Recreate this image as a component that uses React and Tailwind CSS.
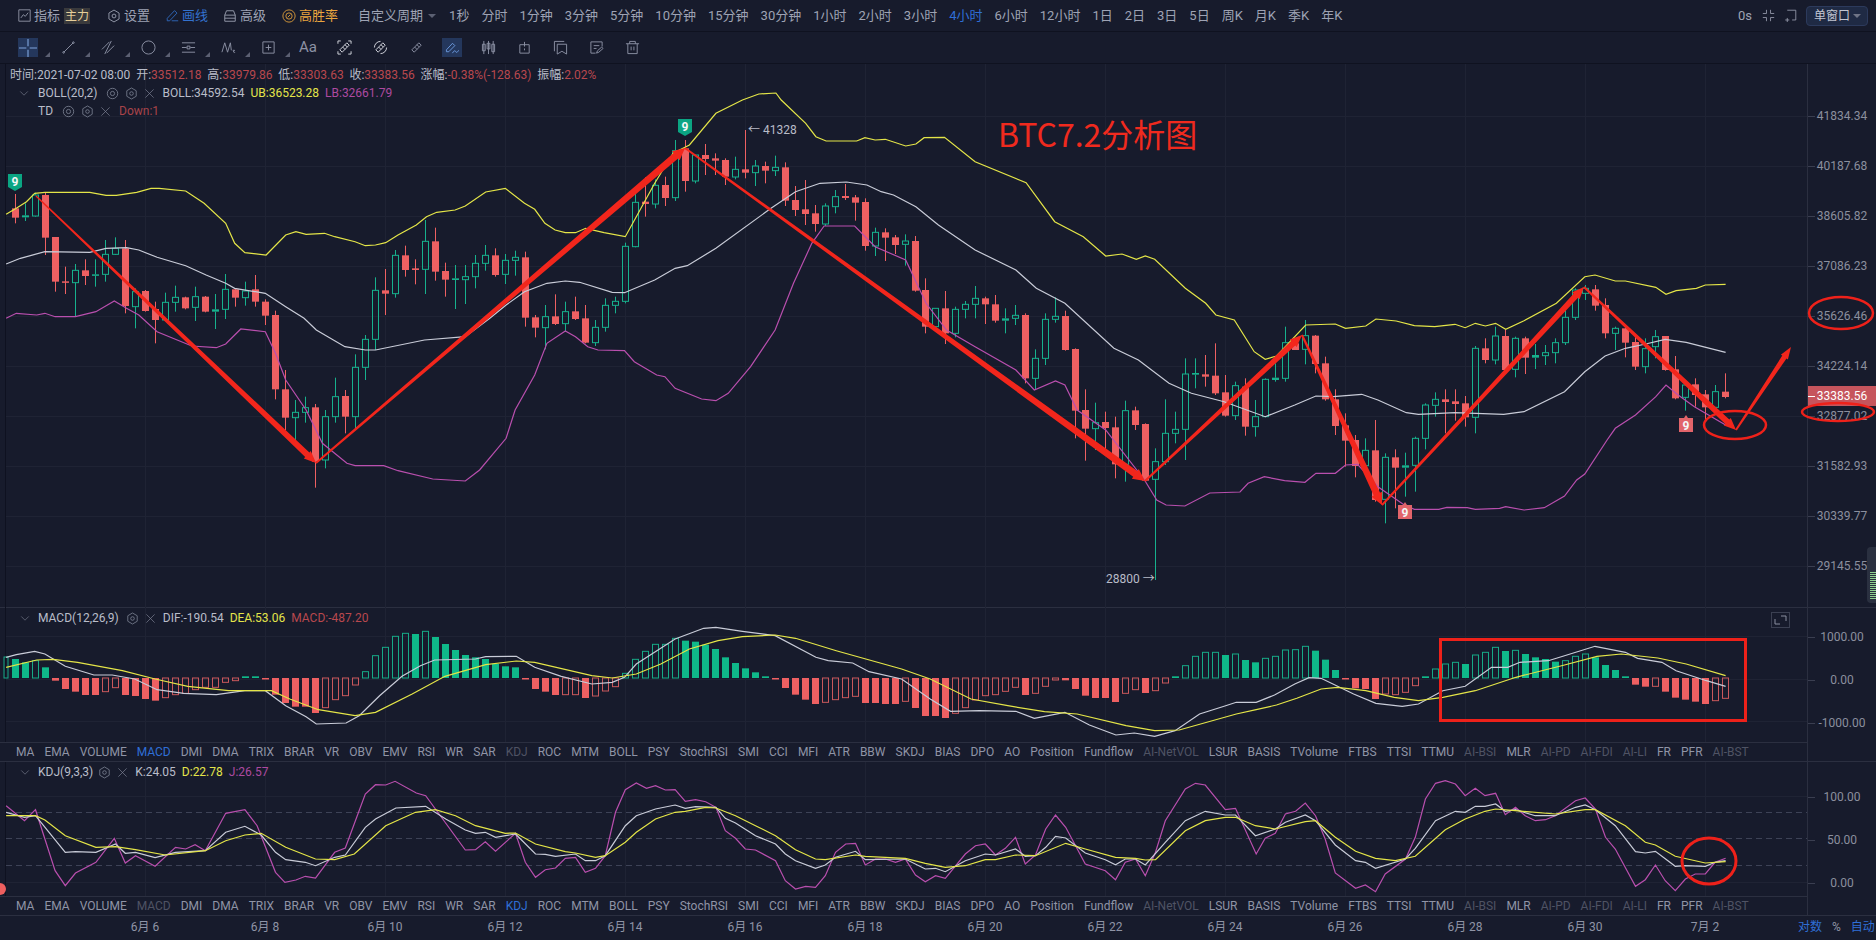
import React from "react";

// readings are taken in three chart crops, so each series comes in three parts
const CUT_A = 628;
const CUT_B = 1245;
const toXY = (pts, ox, oy, sx) => pts.map(([x, y]) => [ox + x / sx, oy + y / 3]);
const series = (a, b, c, oy) => {
  const [ya, yb, yc] = oy;
  const all = [
    ...toXY(a, 0, ya, 2.45).filter((p) => p[0] < CUT_A),
    ...toXY(b, 620, yb, 2.45).filter((p) => p[0] >= CUT_A && p[0] < CUT_B),
    ...toXY(c, 1240, yc, 2.465).filter((p) => p[0] >= CUT_B),
  ];
  return all.map((p) => `${p[0].toFixed(1)},${p[1].toFixed(1)}`).join(" ");
};
const MAIN_Y = [120, 100, 270];
const SUB_Y = [600, 600, 600];

const CANDLES_A = [
  ["r",265,293,222,310],["g",286,292,250,303],["g",225,288,218,290],["r",225,353,218,405],["r",351,485,351,515],
  ["r",484,488,440,522],["g",451,488,432,588],["r",451,468,418,495],["g",463,467,418,500],["g",403,463,360,485],
  ["g",385,403,352,405],["r",385,558,360,580],["g",515,560,505,625],["r",513,573,510,575],["r",567,600,545,670],
  ["g",547,600,518,602],["g",532,547,497,575],["r",532,565,530,568],["g",530,562,500,603],["r",530,575,528,577],
  ["g",568,575,522,627],["g",508,568,462,597],["r",508,533,505,560],["g",513,533,485,557],["r",508,545,465,560],
  ["r",545,587,538,615],["r",585,808,572,838],["r",808,893,750,930],["g",877,893,840,960],["g",863,877,830,908],
  ["r",862,1025,852,1103],["g",890,1020,870,1045],["g",830,890,773,908],["r",828,890,810,940],["g",742,890,703,925],
  ["g",658,742,645,780],["g",511,658,472,690],["r",511,521,447,585],["g",406,521,390,533],["r",406,450,377,470],
  ["r",445,450,418,493],["g",364,448,300,522],["r",364,455,323,482],["r",453,479,428,530],["g",475,480,435,567],
  ["g",470,479,435,552],["g",430,470,405,505],["g",406,430,375,452],["r",406,465,385,470],["g",421,463,402,492],
  ["g",412,421,392,467],["r",412,593,395,620],["r",592,623,585,652],["g",590,623,555,688],["r",589,612,523,615],
  ["g",575,611,545,635],["r",574,597,530,600],["r",595,668,555,670],["g",622,668,600,678],["g",556,622,535,635],
  ["g",544,556,530,580],["g",379,544,368,550],["g",247,380,222,382],
];
const CANDLES_B = [
  ["r",305,312,232,350],["g",256,312,238,325],["r",255,294,230,318],["g",152,293,120,303],["r",145,243,120,275],
  ["g",165,243,165,250],["r",165,177,132,225],["r",175,182,160,225],["r",180,230,175,255],["g",208,231,170,238],
  ["r",208,218,90,235],["g",198,218,180,258],["r",198,212,185,250],["g",202,212,167,228],["r",202,302,187,318],
  ["r",300,330,258,348],["r",328,342,240,375],["r",340,372,315,395],["g",318,372,310,378],["g",290,320,270,340],
  ["r",288,294,252,300],["r",292,308,285,362],["r",306,438,295,452],["g",397,438,383,468],["r",397,413,385,483],
  ["r",412,435,405,462],["g",423,433,403,497],["r",423,572,408,575],["r",570,680,535,700],["g",625,680,625,690],
  ["r",625,700,573,732],["g",628,700,620,712],["g",613,628,603,655],["g",595,613,558,655],["r",595,613,590,672],
  ["r",613,662,585,668],["g",655,662,625,700],["g",646,655,615,675],["r",645,835,640,850],["g",775,835,748,870],
  ["g",658,775,640,795],["g",649,658,592,668],["r",648,750,632,752],["r",747,932,745,1015],["r",930,986,868,1082],
  ["g",968,986,908,1050],["r",966,984,935,1050],["r",982,1093,950,1135],["g",932,1093,902,1145],["r",931,975,920,990],
  ["r",972,1142,970,1145],["g",1085,1138,1045,1440],["g",1000,1085,898,1095],["g",988,1000,935,1030],["g",822,988,775,1080],
  ["g",819,824,775,865],["r",823,830,765,860],["r",827,880,730,885],["r",877,947,825,950],["g",857,947,845,960],
  ["r",860,980,835,1007],["g",950,980,900,1010],
];
const CANDLES_C = [
  ["g",328,440,325,442],["g",323,330,280,335],["g",218,325,170,335],["r",220,240,205,240],["g",197,238,150,283],
  ["r",197,282,195,310],["r",280,388,260,392],["r",388,468,358,495],["r",466,512,430,590],["r",510,588,495,622],
  ["g",541,587,505,590],["r",541,690,450,695],["g",562,688,550,760],["r",562,593,538,715],["g",586,593,548,680],
  ["g",505,586,500,665],["g",405,505,400,538],["g",388,406,367,440],["r",388,396,358,490],["r",394,402,358,452],
  ["r",400,442,378,470],["g",235,442,228,490],["r",235,270,205,280],["g",198,270,170,283],["r",198,300,180,305],
  ["g",205,298,200,322],["r",205,263,200,312],["g",255,263,222,297],["g",248,257,225,285],["g",218,248,205,280],
  ["g",142,218,120,225],["g",60,142,55,150],["g",55,70,45,90],["r",58,107,45,122],["r",105,190,85,205],
  ["g",175,190,170,240],["r",175,218,170,262],["r",216,290,200,300],["g",236,290,205,310],["g",200,230,180,265],
  ["r",198,300,198,302],["r",298,385,258,388],["g",345,382,330,422],["r",343,375,325,410],["r",373,412,360,450],
  ["g",365,412,345,415],["r",365,381,310,385],
];
const toCandle = (oy) => ([t, o, c, h, l]) => [t, oy + o / 3, oy + c / 3, oy + h / 3, oy + l / 3];
const CANDLES = [
  ...CANDLES_A.map(toCandle(120)),
  ...CANDLES_B.map(toCandle(100)),
  ...CANDLES_C.map(toCandle(270)),
];

const UB = series(
  [[15,283],[40,265],[65,245],[85,220],[110,217],[220,217],[260,226],[285,226],[335,217],[370,205],[390,205],[455,213],[500,250],[553,310],[575,370],[600,398],[652,405],[700,345],[725,335],[750,343],[795,340],[820,350],[870,365],[895,377],[920,375],[945,368],[975,345],[1020,315],[1045,290],[1070,277],[1115,270],[1140,258],[1190,216],[1238,205],[1285,250],[1310,268],[1335,310],[1360,330],[1385,338],[1410,338],[1435,325],[1480,338],[1532,350]],
  [[10,408],[40,350],[85,250],[130,160],[170,135],[235,40],[300,0],[340,-18],[382,-21],[395,0],[455,70],[480,110],[505,123],[580,123],[600,113],[625,120],[650,118],[700,138],[725,132],[745,113],[795,112],[870,185],[995,248],[1065,365],[1135,410],[1190,468],[1230,462],[1265,478],[1287,468],[1310,478],[1385,565],[1435,610],[1460,645],[1505,660],[1560,765]],
  [[35,245],[62,268],[90,258],[162,165],[235,162],[260,175],[310,168],[335,147],[385,153],[430,167],[480,170],[530,163],[555,173],[580,160],[605,168],[630,160],[655,178],[700,152],[780,100],[850,20],[875,15],[925,33],[950,33],[1025,52],[1050,73],[1075,62],[1125,55],[1147,45],[1197,43]],
  MAIN_Y
);
const MID = series(
  [[15,432],[50,415],[110,395],[220,397],[260,385],[310,383],[340,390],[385,412],[455,437],[505,465],[553,490],[575,505],[650,520],[700,560],[745,595],[775,630],[845,680],[895,690],[920,690],[1040,660],[1140,650],[1200,595],[1240,555],[1285,515],[1340,490],[1385,483],[1420,487],[1500,517],[1530,518]],
  [[13,578],[85,540],[135,505],[165,497],[235,445],[370,325],[430,275],[490,250],[555,246],[605,255],[640,275],[670,285],[725,320],[780,375],[870,450],[970,510],[1020,565],[1090,610],[1210,745],[1270,780],[1345,850],[1400,880],[1480,905],[1568,948]],
  [[62,440],[135,405],[187,378],[230,380],[300,373],[340,390],[410,428],[440,433],[530,428],[650,433],[700,425],[800,365],[850,305],[900,258],[950,235],[1000,222],[1048,208],[1100,217],[1197,247]],
  MAIN_Y
);
const LB = series(
  [[15,595],[40,580],[90,585],[110,580],[135,590],[185,590],[235,575],[280,543],[310,565],[340,585],[385,635],[470,678],[530,683],[553,672],[590,627],[650,635],[675,700],[700,780],[750,870],[790,970],[850,1030],[870,1037],[940,1037],[975,1052],[1060,1077],[1140,1083],[1175,1050],[1240,955],[1262,870],[1310,765],[1340,670],[1385,633],[1410,650],[1440,680],[1465,690],[1530,692]],
  [[0,750],[35,785],[90,825],[110,830],[135,865],[200,897],[235,902],[265,880],[320,800],[380,690],[425,550],[470,430],[500,378],[575,378],[625,440],[700,480],[750,610],[800,690],[870,740],[970,810],[1015,870],[1067,843],[1090,855],[1120,930],[1190,990],[1285,1140],[1315,1200],[1338,1215],[1384,1218],[1445,1179],[1519,1176]],
  [[20,640],[60,620],[110,632],[160,637],[187,610],[235,610],[260,585],[290,583],[340,650],[405,705],[430,718],[490,718],[510,712],[560,713],[580,718],[640,715],[655,710],[700,720],[750,713],[800,678],[830,630],[850,612],[905,510],[925,475],[975,435],[1025,380],[1050,345],[1080,375],[1120,410],[1197,465]],
  MAIN_Y
);

// negative tip = hollow bar, baseline is 237 in the crop
const HIST = [
  180,190,-185,205,245,270,278,288,288,-278,-266,288,291,300,305,-296,-287,-283,-272,-265,-265,-250,-245,232,232,240,287,312,323,323,342,-326,-302,-290,-258,-218,-170,-145,-112,-103,105,-97,114,135,153,168,175,180,195,202,205,241,270,278,288,-287,-287,297,-291,-276,-263,-223,-181,
  -157,-136,-136,-118,125,128,137,150,175,192,208,220,232,241,267,287,302,315,-310,-302,-296,-292,312,312,315,315,-307,327,351,351,357,-343,-326,-303,-290,-287,-277,-265,288,-283,-262,-243,244,270,290,297,297,309,-283,-272,282,-275,-252,232,-200,-172,-160,-160,168,-165,183,190,
  -178,-172,-153,-152,-142,155,182,213,240,268,270,300,-285,-287,-280,-260,232,-210,-195,-190,195,-168,-160,-145,156,-154,165,175,180,188,-185,-172,-165,175,198,213,232,257,263,-262,278,296,302,308,315,-305,-298,
];

const DIF = series(
  [[15,175],[40,167],[85,157],[110,165],[160,202],[230,228],[275,228],[330,240],[385,272],[450,283],[530,287],[600,275],[650,275],[700,320],[750,353],[775,375],[848,372],[880,350],[930,290],[985,232],[1030,200],[1065,183],[1165,180],[1190,173],[1265,172],[1310,205],[1375,232],[1450,255],[1500,250],[1530,235]],
  [[0,233],[40,195],[135,120],[205,88],[235,85],[300,97],[380,110],[480,175],[510,185],[570,192],[610,218],[690,240],[760,300],[810,337],[880,335],[970,337],[1015,358],[1090,340],[1150,378],[1215,408],[1260,402],[1310,412],[1360,395],[1420,345],[1480,322],[1510,310],[1568,305]],
  [[40,310],[85,288],[135,255],[170,236],[200,238],[280,285],[335,313],[400,322],[440,315],[500,275],[555,262],[620,205],[660,205],[690,190],[760,185],[800,170],[875,142],[950,160],[980,178],[1040,190],[1075,215],[1150,245],[1197,262]],
  SUB_Y
);
const DEA = series(
  [[15,205],[90,183],[130,181],[190,190],[300,215],[380,240],[460,262],[560,275],[665,275],[710,300],[780,332],[870,350],[920,340],[1010,285],[1090,232],[1190,197],[1265,186],[1310,190],[1450,230],[1500,237]],
  [[0,235],[40,225],[100,195],[170,150],[240,125],[300,113],[380,108],[430,118],[530,155],[690,210],[760,240],[860,300],[950,320],[1040,338],[1120,345],[1240,380],[1310,395],[1370,393],[1510,345],[1568,330]],
  [[40,332],[90,318],[140,298],[200,270],[240,265],[310,275],[380,295],[440,305],[500,295],[580,275],[680,235],[800,198],[880,172],[940,165],[1030,177],[1100,195],[1197,230]],
  SUB_Y
);

const KDJ_J = series(
  [[15,620],[60,665],[87,632],[110,720],[135,815],[160,860],[185,822],[235,790],[280,718],[307,792],[332,770],[380,802],[430,745],[455,750],[478,737],[503,755],[553,643],[600,632],[630,680],[675,820],[698,850],[725,843],[748,832],[773,837],[820,760],[846,747],[895,585],[920,557],[945,558],[968,547],[1020,582],[1043,590],[1140,753],[1165,752],[1189,728],[1214,757],[1263,703],[1287,790],[1312,835],[1336,812],[1361,807],[1385,778],[1410,775],[1434,820],[1459,808],[1483,770],[1508,640],[1532,572]],
  [[0,600],[15,565],[40,552],[65,568],[87,560],[111,573],[135,572],[160,607],[185,602],[210,608],[235,625],[258,695],[283,718],[307,750],[332,753],[381,785],[405,845],[430,870],[455,862],[479,865],[503,830],[528,760],[553,735],[577,733],[601,798],[626,780],[650,780],[675,790],[699,780],[724,828],[748,848],[773,830],[797,838],[846,765],[871,740],[895,735],[920,768],[944,748],[969,715],[993,795],[1018,768],[1043,690],[1067,648],[1092,685],[1140,795],[1189,815],[1214,842],[1238,790],[1263,780],[1287,830],[1312,760],[1336,665],[1385,570],[1410,553],[1434,558],[1483,632],[1508,628],[1532,730],[1557,768],[1568,750]],
  [[40,765],[62,718],[87,703],[112,645],[137,637],[161,612],[186,650],[210,720],[235,822],[285,868],[309,858],[334,878],[358,825],[408,780],[432,715],[457,600],[482,553],[506,545],[531,555],[555,590],[580,568],[604,590],[630,583],[654,647],[679,625],[703,650],[728,665],[753,662],[777,650],[827,605],[851,597],[876,630],[901,715],[925,750],[975,862],[999,842],[1024,798],[1048,845],[1073,875],[1098,840],[1122,825],[1147,825],[1171,790],[1197,778]],
  SUB_Y
);
const KDJ_K = series(
  [[15,640],[60,655],[87,650],[160,760],[185,758],[235,760],[283,735],[307,763],[332,760],[380,776],[430,760],[503,755],[553,700],[600,682],[640,708],[675,760],[700,782],[748,790],[773,800],[820,775],[846,768],[895,685],[920,660],[970,627],[1043,622],[1092,660],[1140,693],[1165,703],[1189,700],[1214,715],[1263,705],[1312,765],[1336,766],[1361,772],[1410,765],[1434,785],[1459,785],[1483,770],[1532,680]],
  [[0,680],[40,650],[87,630],[135,618],[160,628],[185,623],[235,625],[258,658],[283,672],[332,710],[381,735],[405,765],[430,785],[479,808],[503,798],[528,775],[577,757],[601,782],[699,780],[748,810],[773,808],[797,818],[846,785],[895,765],[920,768],[969,750],[993,772],[1018,770],[1043,745],[1067,712],[1092,717],[1140,762],[1189,782],[1214,797],[1238,780],[1263,780],[1287,798],[1336,730],[1385,665],[1434,637],[1483,648],[1508,648],[1532,690],[1557,708],[1568,700]],
  [[38,710],[87,690],[112,670],[161,648],[186,665],[235,738],[285,785],[309,790],[334,808],[408,780],[432,748],[482,665],[531,637],[555,640],[580,622],[604,622],[630,615],[654,637],[679,632],[728,650],[777,650],[827,625],[851,618],[876,632],[925,680],[975,758],[999,762],[1024,757],[1073,802],[1098,800],[1147,802],[1171,790],[1197,785]],
  SUB_Y
);
const KDJ_D = series(
  [[15,650],[87,650],[110,663],[160,710],[235,745],[283,743],[332,752],[405,768],[503,755],[553,725],[600,708],[640,703],[700,745],[773,780],[820,782],[868,765],[945,680],[1018,640],[1067,632],[1116,650],[1165,680],[1238,703],[1263,702],[1312,735],[1385,758],[1410,762],[1459,775],[1483,770],[1532,730]],
  [[0,745],[40,700],[87,660],[135,640],[160,637],[210,625],[235,627],[283,650],[332,680],[381,710],[430,752],[479,780],[503,782],[577,768],[601,772],[699,778],[748,793],[797,805],[846,800],[895,782],[920,782],[969,768],[1018,770],[1092,733],[1140,750],[1214,775],[1263,778],[1287,783],[1312,782],[1385,695],[1434,665],[1483,655],[1508,655],[1532,672],[1568,685]],
  [[38,680],[87,690],[161,668],[186,665],[235,715],[285,757],[334,778],[383,785],[432,772],[506,692],[555,660],[604,637],[630,630],[679,635],[777,645],[851,632],[876,632],[950,680],[999,730],[1024,738],[1073,772],[1147,792],[1197,788]],
  SUB_Y
);

const GRID_X = Array.from({ length: 14 }, (_, i) => 145 + 120 * i);
const candleX = (i) => 15.5 + 10 * i;

const YELLOW = "#e4e548";
const WHITE = "#c9ccd8";
const PINK = "#b94fae";

const PERIODS = ["1秒","分时","1分钟","3分钟","5分钟","10分钟","15分钟","30分钟","1小时","2小时","3小时","4小时","6小时","12小时","1日","2日","3日","5日","周K","月K","季K","年K"];
const INDICATORS = ["MA","EMA","VOLUME","MACD","DMI","DMA","TRIX","BRAR","VR","OBV","EMV","RSI","WR","SAR","KDJ","ROC","MTM","BOLL","PSY","StochRSI","SMI","CCI","MFI","ATR","BBW","SKDJ","BIAS","DPO","AO","Position","Fundflow","AI-NetVOL","LSUR","BASIS","TVolume","FTBS","TTSI","TTMU","AI-BSI","MLR","AI-PD","AI-FDI","AI-LI","FR","PFR","AI-BST"];
const DIM = ["AI-NetVOL","AI-BSI","AI-PD","AI-FDI","AI-LI","AI-BST"];
const PRICES = ["41834.34","40187.68","38605.82","37086.23","35626.46","34224.14","32877.02","31582.93","30339.77","29145.55"];
const DATES = ["6月 6","6月 8","6月 10","6月 12","6月 14","6月 16","6月 18","6月 20","6月 22","6月 24","6月 26","6月 28","6月 30","7月 2"];

// tapered hand-drawn trend stroke with a small head at its end
function trendPath(a, b, w0, w1) {
  const dx = b[0] - a[0];
  const dy = b[1] - a[1];
  const len = Math.hypot(dx, dy);
  const ux = dx / len;
  const uy = dy / len;
  const nx = -uy;
  const ny = ux;
  const nk = [b[0] - ux * 12, b[1] - uy * 12];
  const pts = [
    [a[0] + (nx * w0) / 2, a[1] + (ny * w0) / 2],
    [nk[0] + (nx * w1) / 2, nk[1] + (ny * w1) / 2],
    [nk[0] + nx * w1 * 0.85, nk[1] + ny * w1 * 0.85],
    b,
    [nk[0] - nx * w1 * 0.85, nk[1] - ny * w1 * 0.85],
    [nk[0] - (nx * w1) / 2, nk[1] - (ny * w1) / 2],
    [a[0] - (nx * w0) / 2, a[1] - (ny * w0) / 2],
  ];
  return pts.map((p) => `${p[0].toFixed(1)},${p[1].toFixed(1)}`).join(" ");
}
const TRENDS = [
  [[36, 196], [316, 463], 1.5, 6],
  [[316, 463], [685, 148], 2, 7],
  [[685, 148], [1145, 481], 2, 7],
  [[1145, 481], [1302, 335], 2, 6],
  [[1302, 335], [1382, 505], 2, 7],
  [[1382, 505], [1584, 287], 2, 6],
  [[1584, 287], [1736, 430], 2, 6],
  [[1736, 430], [1791, 347], 2, 5],
];

function Grid({ top, height, ys }) {
  return (
    <>
      {GRID_X.map((x) => (
        <line key={x} x1={x + 0.5} x2={x + 0.5} y1={top} y2={top + height} stroke="#1f2334" />
      ))}
      {ys.map((y) => (
        <line key={y} x1="6" x2="1807" y1={y + 0.5} y2={y + 0.5} stroke="#1f2334" />
      ))}
      <line x1="5.5" x2="5.5" y1={top} y2={top + height} stroke="#0e1120" />
    </>
  );
}

function Candle({ d, x }) {
  const [type, top, bottom, high, low] = d;
  const red = type === "r";
  const color = red ? "#ee6062" : "#17b18d";
  const tiny = bottom - top < 3;
  return (
    <g>
      <line x1={x} x2={x} y1={high} y2={red ? low : top} stroke={color} />
      {!red && <line x1={x} x2={x} y1={bottom} y2={low} stroke={color} />}
      {red || tiny ? (
        <rect x={x - 3.5} y={top} width="7" height={Math.max(bottom - top, 1.5)} fill={color} />
      ) : (
        <rect x={x - 3} y={top} width="6" height={bottom - top} fill="none" stroke={color} />
      )}
    </g>
  );
}

function Marker({ x, y, up, fill }) {
  // small "9" flag of the TD indicator
  const shape = up
    ? `${x},${y + 3} ${x + 5},${y + 3} ${x + 7},${y} ${x + 9},${y + 3} ${x + 14},${y + 3} ${x + 14},${y + 17} ${x},${y + 17}`
    : `${x},${y} ${x + 14},${y} ${x + 14},${y + 13} ${x + 7},${y + 17} ${x},${y + 13}`;
  return (
    <g>
      <polygon points={shape} fill={fill} />
      <text x={x + 7} y={up ? y + 14.5 : y + 11.5} textAnchor="middle" fontSize="12" fontWeight="700" fill="#f4f6f6" fontFamily="Roboto, sans-serif">
        9
      </text>
    </g>
  );
}

function Ico({ size = 14, children, className = "" }) {
  return (
    <svg width={size} height={size} viewBox="0 0 16 16" fill="none" stroke="currentColor" strokeWidth="1" className={`shrink-0 ${className}`}>
      {children}
    </svg>
  );
}
const HexIcon = ({ size = 14 }) => (
  <Ico size={size}>
    <path d="M8 1.2 13.8 4.6v6.8L8 14.8 2.2 11.4V4.6Z" />
    <circle cx="8" cy="8" r="2.2" />
  </Ico>
);
const EyeIcon = () => (
  <Ico size={13}>
    <circle cx="8" cy="8" r="6.4" />
    <circle cx="8" cy="8" r="2.6" />
  </Ico>
);
const CloseIcon = () => (
  <Ico size={11}>
    <path d="M2 2 14 14M14 2 2 14" />
  </Ico>
);
const ChevronIcon = () => (
  <Ico size={10}>
    <path d="M2 5.5 8 11.5 14 5.5" />
  </Ico>
);

const TOOLS = [
  { corner: true, active: true, icon: <path d="M8 0v6.5M8 9.5V16M0 8h6.5M9.5 8H16" stroke="#7ea3dc" /> },
  { corner: true, icon: <><path d="M3 13 13 3" /><circle cx="2.8" cy="13.2" r="0.9" /><circle cx="13.2" cy="2.8" r="0.9" /></> },
  { corner: true, icon: <path d="M1 10 9 2M6 14 14 6M11 1 4 15" /> },
  { corner: true, icon: <circle cx="8" cy="8" r="7" /> },
  { corner: true, icon: <path d="M1 3h14M1 8h5M10 8h5M1 13h14M6.5 6.5h3v3h-3z" /> },
  { corner: true, icon: <path d="M1 13 4 3l3 10 3-10 1 8M12.5 11h2l-1.5 1.6c1.5 0 1.8.6 1.3 1.3" /> },
  { corner: true, icon: <path d="M2 2h12v12H2zM8 5v6M5 8h6" /> },
  { text: "Aa" },
  { bright: true, icon: <><path d="M1 4V1h3M12 1h3v3M15 12v3h-3M4 15H1v-3" /><path d="M3 10.5 10.5 3 13 5.5 5.5 13ZM6 7.5l2.5 2.5M8.5 5l2.5 2.5" /></> },
  { bright: true, icon: <><path d="M3 10.5 10.5 3 13 5.5 5.5 13ZM6 7.5l2.5 2.5M8.5 5l2.5 2.5" /><path d="M1.5 8A6.5 6.5 0 0 1 8 1.5M14.5 8A6.5 6.5 0 0 1 8 14.5" /></> },
  { icon: <path d="M3 10.5 10.5 3 13 5.5 5.5 13ZM6 7.5l2.5 2.5M8.5 5l2.5 2.5" /> },
  { active: true, icon: <path d="M1.5 10.5 8 3.5l2.5 2.5L4 12.5H1.5ZM8 14c1.5-3 3-3 3.5-1.5s2 .5 3-1.5" stroke="#6d9be0" /> },
  { icon: <path d="M3 1v14M1.5 4.5h3v7h-3zM8 1v14M6.5 3.5h3v6h-3zM13 1v14M11.5 4.5h3v8h-3z" /> },
  { icon: <path d="M3 5h10v9H3zM8 2v5M8 9v2" /> },
  { icon: <path d="M1.5 12V1.5H12M4.5 4.5h10V15l-5-3-5 3z" /> },
  { icon: <path d="M2 2h12v5M2 2v12h5M5 6h6M5 9h3M8 14l1-2.5 4.5-4 1.5 1.5-4.5 4Z" /> },
  { icon: <path d="M1 4h14M5 4V1.5h6V4M3 4v10.5h10V4M6.5 7v4M9.5 7v4" /> },
];

function IndicatorTabs({ active, dim }) {
  return (
    <div className="h-[20px] border-b border-[#2b2f40] shrink-0">
      <div className="w-[1808px] h-full border-t border-r border-[#2b2f40] flex items-center gap-[10px] pl-[16px] text-xs text-[#8f94a6] overflow-hidden">
        {INDICATORS.map((name) => (
          <span key={name} className={name === active ? "text-[#2f6fd6]" : name === dim || DIM.includes(name) ? "text-[#4f5364]" : ""}>
            {name}
          </span>
        ))}
      </div>
    </div>
  );
}

function AxisLabel({ label, className }) {
  return (
    <div className={`relative flex items-center justify-center ${className}`}>
      <span className="absolute left-0 top-1/2 w-[7px] h-px bg-[#3a3e50]" />
      {label}
    </div>
  );
}

export default function App() {
  return (
    <div className="relative w-[1876px] h-[940px] overflow-hidden bg-[#171b2c] text-[#9ea3b4] text-xs font-['Roboto','Noto_Sans_CJK_SC',sans-serif]">
      {/* top bar */}
      <div className="h-[32px] flex items-center pl-[18px] border-b border-[#0f1220] text-[13px]">
        <Ico size={13}>
          <path d="M1 1h14v14H1zM3.5 11l3-4 2.5 2 3.5-4.5" />
        </Ico>
        <span className="ml-[3px]">指标</span>
        <span className="ml-[4px] w-[26px] h-[16px] bg-[#3a3a3c] text-[#e7cf9a] flex items-center justify-center text-xs">主力</span>
        <span className="ml-[17px]"><HexIcon /></span>
        <span className="ml-[3px]">设置</span>
        <span className="ml-[16px] text-[#3372cf]">
          <Ico size={13}><path d="M1.5 14.5v-3L10.5 2l3 3-9 9.5ZM7 14.5h8" /></Ico>
        </span>
        <span className="ml-[3px] text-[#3372cf]">画线</span>
        <span className="ml-[15px]">
          <Ico size={14}><path d="M2 7h12v7H2zM2 7l2-5h8l2 5M2 10.5h12" /></Ico>
        </span>
        <span className="ml-[3px]">高级</span>
        <span className="ml-[16px] text-[#e2a13c]">
          <Ico size={14}><circle cx="8" cy="8" r="7" /><circle cx="8" cy="8" r="3.6" /><path d="M6.5 9.5 9.5 6.5" /></Ico>
        </span>
        <span className="ml-[3px] text-[#e9a53f]">高胜率</span>
        <span className="ml-[20px]">自定义周期</span>
        <span className="ml-[5px] w-0 h-0 border-x-[4px] border-x-transparent border-t-[4px] border-t-[#5b6072]" />
        <div className="ml-[13px] flex gap-[12px]">
          {PERIODS.map((p) => (
            <span key={p} className={p === "4小时" ? "text-[#2f6fd6]" : ""}>{p}</span>
          ))}
        </div>
        <span className="ml-auto text-[13px]">0s</span>
        <span className="ml-[10px]">
          <Ico size={13}><path d="M5.5 1v4.5H1M10.5 1v4.5H15M5.5 15v-4.5H1M10.5 15v-4.5H15" /></Ico>
        </span>
        <span className="ml-[9px]">
          <Ico size={13}><path d="M4 1.5h10.5v12H10M1.5 13.5h5M4 11v5" /></Ico>
        </span>
        <div className="ml-[9px] mr-[8px] w-[62px] h-[20px] bg-[#1f2a44] border border-[#2c3a5c] rounded-sm flex items-center pl-[7px] text-[#c2c6d2] text-xs">
          单窗口
          <span className="ml-[3px] w-0 h-0 border-x-[4px] border-x-transparent border-t-[4px] border-t-[#6f7486]" />
        </div>
      </div>

      {/* drawing toolbar */}
      <div className="h-[32px] flex items-center pl-[18px] border-b border-[#0f1220]">
        {TOOLS.map((t, i) => (
          <div
            key={i}
            className={`relative w-[20px] h-[19px] flex items-center justify-center shrink-0 ${i < 7 ? "mr-[20px]" : "mr-[16px]"} ${t.active ? "bg-[#24375c]" : ""} ${t.bright ? "text-[#d9dbe2]" : "text-[#8d92a5]"}`}
          >
            {t.text ? <span className="text-[15px]">{t.text}</span> : <Ico size={t.active && i === 0 ? 18 : 15}>{t.icon}</Ico>}
            {t.corner && <span className="absolute -right-[12px] bottom-0 w-0 h-0 border-l-[5px] border-l-transparent border-b-[5px] border-b-[#5c6072]" />}
          </div>
        ))}
      </div>

      {/* main chart */}
      <div className="h-[544px] flex border-b border-[#2b2f40]">
        <div className="relative w-[1807px] shrink-0">
          <svg width="1807" height="544" viewBox="0 64 1807 544" className="block">
            <Grid top={64} height={544} ys={[116, 166, 216, 266, 316, 366, 416, 466, 516, 566]} />
            {CANDLES.map((d, i) => (
              <Candle key={i} d={d} x={candleX(i)} />
            ))}
            <polyline points={UB} fill="none" stroke={YELLOW} strokeWidth="1.2" />
            <polyline points={MID} fill="none" stroke={WHITE} strokeWidth="1.2" />
            <polyline points={LB} fill="none" stroke={PINK} strokeWidth="1.2" />
            <Marker x={8} y={174} fill="#0ba583" />
            <Marker x={678} y={119} fill="#0ba583" />
            <Marker x={1679} y={415} up fill="#e2646a" />
            <Marker x={1398} y={502} up fill="#e2646a" />
            <text x="748" y="134" fontSize="12" fill="#b9bcc8">← 41328</text>
            <text x="1106" y="583" fontSize="12" fill="#b9bcc8">28800 →</text>
          </svg>
          <div className="absolute left-[10px] top-[2px] text-[#b9bdc9]">
            <div className="h-[18px] flex items-center gap-[5.8px]">
              <span>时间:2021-07-02 08:00</span>
              <span>开:<span className="text-[#b9484e]">33512.18</span></span>
              <span>高:<span className="text-[#b9484e]">33979.86</span></span>
              <span>低:<span className="text-[#b9484e]">33303.63</span></span>
              <span>收:<span className="text-[#b9484e]">33383.56</span></span>
              <span>涨幅:<span className="text-[#b9484e]">-0.38%(-128.63)</span></span>
              <span>振幅:<span className="text-[#b9484e]">2.02%</span></span>
            </div>
            <div className="h-[18px] flex items-center text-[#7d8294]">
              <span className="ml-[9px]"><ChevronIcon /></span>
              <span className="ml-[9px] text-[#b9bdc9]">BOLL(20,2)</span>
              <span className="ml-[8px]"><EyeIcon /></span>
              <span className="ml-[6px]"><HexIcon size={13} /></span>
              <span className="ml-[6px]"><CloseIcon /></span>
              <span className="ml-[8px] text-[#b9bdc9]">BOLL:34592.54</span>
              <span className="ml-[6px] text-[#e4e54a]">UB:36523.28</span>
              <span className="ml-[6px] text-[#ad4aa0]">LB:32661.79</span>
            </div>
            <div className="h-[18px] flex items-center text-[#7d8294]">
              <span className="ml-[28px] text-[#b9bdc9]">TD</span>
              <span className="ml-[9px]"><EyeIcon /></span>
              <span className="ml-[6px]"><HexIcon size={13} /></span>
              <span className="ml-[6px]"><CloseIcon /></span>
              <span className="ml-[8px] text-[#a8444a]">Down:1</span>
            </div>
          </div>
        </div>
        <div className="relative w-[69px] border-l border-[#2b2f40] pt-[27px] text-[#8b8f9e]">
          {PRICES.map((p) => (
            <AxisLabel key={p} label={p} className="h-[50px]" />
          ))}
          <div className="absolute left-0 right-0 top-[322px] h-[20px] bg-[#c6555d] text-white flex items-center justify-center">
            <span className="absolute left-0 top-1/2 w-[7px] h-px bg-white" />
            33383.56
          </div>
          <div className="absolute right-0 top-[483px] w-[9px] h-[56px] rounded-l-sm bg-[#2a3040] flex items-end pb-[4px] pl-[3px]">
            <div className="w-[6px] h-[27px] bg-[repeating-linear-gradient(to_bottom,#8fd08f_0px,#8fd08f_1px,#2a3040_1px,#2a3040_2px)]" />
          </div>
        </div>
      </div>

      {/* MACD */}
      <div className="h-[134px] flex">
        <div className="relative w-[1807px] shrink-0">
          <svg width="1807" height="134" viewBox="0 609 1807 134" className="block">
            <Grid top={609} height={134} ys={[637, 680, 722]} />
            {HIST.map((v, i) => {
              const tip = 600 + Math.abs(v) / 3;
              const up = tip < 679;
              const color = up ? "#0fb98a" : "#ee6062";
              const x = candleX(i);
              const y = Math.min(tip, 679);
              const h = Math.max(Math.abs(tip - 679), 1.5);
              return v < 0 ? (
                <rect key={i} x={x - 3} y={y} width="6" height={h} fill="none" stroke={up ? "#17a986" : "#c9585c"} />
              ) : (
                <rect key={i} x={x - 3.5} y={y} width="7" height={h} fill={color} />
              );
            })}
            <rect x="4" y="658" width="4" height="21" fill="none" stroke="#17a986" />
            <polyline points={DIF} fill="none" stroke={WHITE} strokeWidth="1.2" />
            <polyline points={DEA} fill="none" stroke={YELLOW} strokeWidth="1.2" />
            <g fill="none" stroke="#3b4052">
              <rect x="1771.5" y="613.5" width="18" height="15" />
              <path d="M1775 620v5h5M1786 622v-5h-5" stroke="#8a8f9f" />
            </g>
          </svg>
          <div className="absolute left-[20px] top-px h-[18px] flex items-center text-[#7d8294]">
            <ChevronIcon />
            <span className="ml-[8px] text-[#b9bdc9]">MACD(12,26,9)</span>
            <span className="ml-[7px]"><HexIcon size={13} /></span>
            <span className="ml-[6px]"><CloseIcon /></span>
            <span className="ml-[7px] text-[#b9bdc9]">DIF:-190.54</span>
            <span className="ml-[6px] text-[#e4e54a]">DEA:53.06</span>
            <span className="ml-[6px] text-[#b9484e]">MACD:-487.20</span>
          </div>
        </div>
        <div className="w-[69px] border-l border-[#2b2f40] pt-[7px] text-[#8b8f9e]">
          {["1000.00", "0.00", "-1000.00"].map((p) => (
            <AxisLabel key={p} label={p} className="h-[43px]" />
          ))}
        </div>
      </div>

      <IndicatorTabs active="MACD" dim="KDJ" />

      {/* KDJ */}
      <div className="h-[134px] flex">
        <div className="relative w-[1807px] shrink-0">
          <svg width="1807" height="134" viewBox="0 763 1807 134" className="block">
            <Grid top={763} height={134} ys={[797, 883]} />
            {[813, 839, 866].map((y) => (
              <line key={y} x1="6" x2="1807" y1={y + 0.5} y2={y + 0.5} stroke="#3d4256" strokeDasharray="6 4" />
            ))}
            <polyline points={KDJ_J} fill="none" stroke={PINK} strokeWidth="1.2" />
            <polyline points={KDJ_K} fill="none" stroke={WHITE} strokeWidth="1.2" />
            <polyline points={KDJ_D} fill="none" stroke={YELLOW} strokeWidth="1.2" />
            <circle cx="0" cy="890" r="6" fill="#ee5f5f" />
          </svg>
          <div className="absolute left-[20px] top-px h-[18px] flex items-center text-[#7d8294]">
            <ChevronIcon />
            <span className="ml-[8px] text-[#b9bdc9]">KDJ(9,3,3)</span>
            <span className="ml-[5px]"><HexIcon size={13} /></span>
            <span className="ml-[6px]"><CloseIcon /></span>
            <span className="ml-[7px] text-[#b9bdc9]">K:24.05</span>
            <span className="ml-[6px] text-[#e4e54a]">D:22.78</span>
            <span className="ml-[6px] text-[#ad4aa0]">J:26.57</span>
          </div>
        </div>
        <div className="w-[69px] border-l border-[#2b2f40] pt-[13px] text-[#8b8f9e]">
          {["100.00", "50.00", "0.00"].map((p) => (
            <AxisLabel key={p} label={p} className="h-[43px]" />
          ))}
        </div>
      </div>

      <IndicatorTabs active="KDJ" dim="MACD" />

      {/* time axis */}
      <div className="h-[22px] flex items-center pl-[85px] text-[#8f94a6] whitespace-nowrap">
        {DATES.map((d) => (
          <span key={d} className="w-[120px] text-center shrink-0">{d}</span>
        ))}
        <span className="ml-[33px] text-[#2f6fd6] shrink-0">对数</span>
        <span className="ml-[10px] shrink-0">%</span>
        <span className="ml-[10px] text-[#2f6fd6] shrink-0">自动</span>
      </div>

      {/* hand-drawn annotations over the chart */}
      <svg width="1876" height="940" viewBox="0 0 1876 940" className="absolute left-0 top-0 pointer-events-none">
        {TRENDS.map(([a, b, w0, w1], i) => (
          <polygon key={i} points={trendPath(a, b, w0, w1)} fill="#f2261c" />
        ))}
        <g fill="none" stroke="#ee211a" strokeWidth="2.5">
          <ellipse cx="1841" cy="313" rx="32" ry="16" />
          <ellipse cx="1838" cy="412" rx="36" ry="9" />
          <ellipse cx="1735" cy="425" rx="31" ry="14" />
          <rect x="1440.5" y="639.5" width="305" height="81" strokeWidth="3" />
          <ellipse cx="1709" cy="861" rx="27" ry="23" strokeWidth="3" />
        </g>
      </svg>
      <div className="absolute left-[998px] top-[113px] text-[32px] leading-[40px] text-[#f02a1e] whitespace-nowrap font-['Noto_Sans_CJK_SC',sans-serif]">
        BTC7.2分析图
      </div>
    </div>
  );
}
